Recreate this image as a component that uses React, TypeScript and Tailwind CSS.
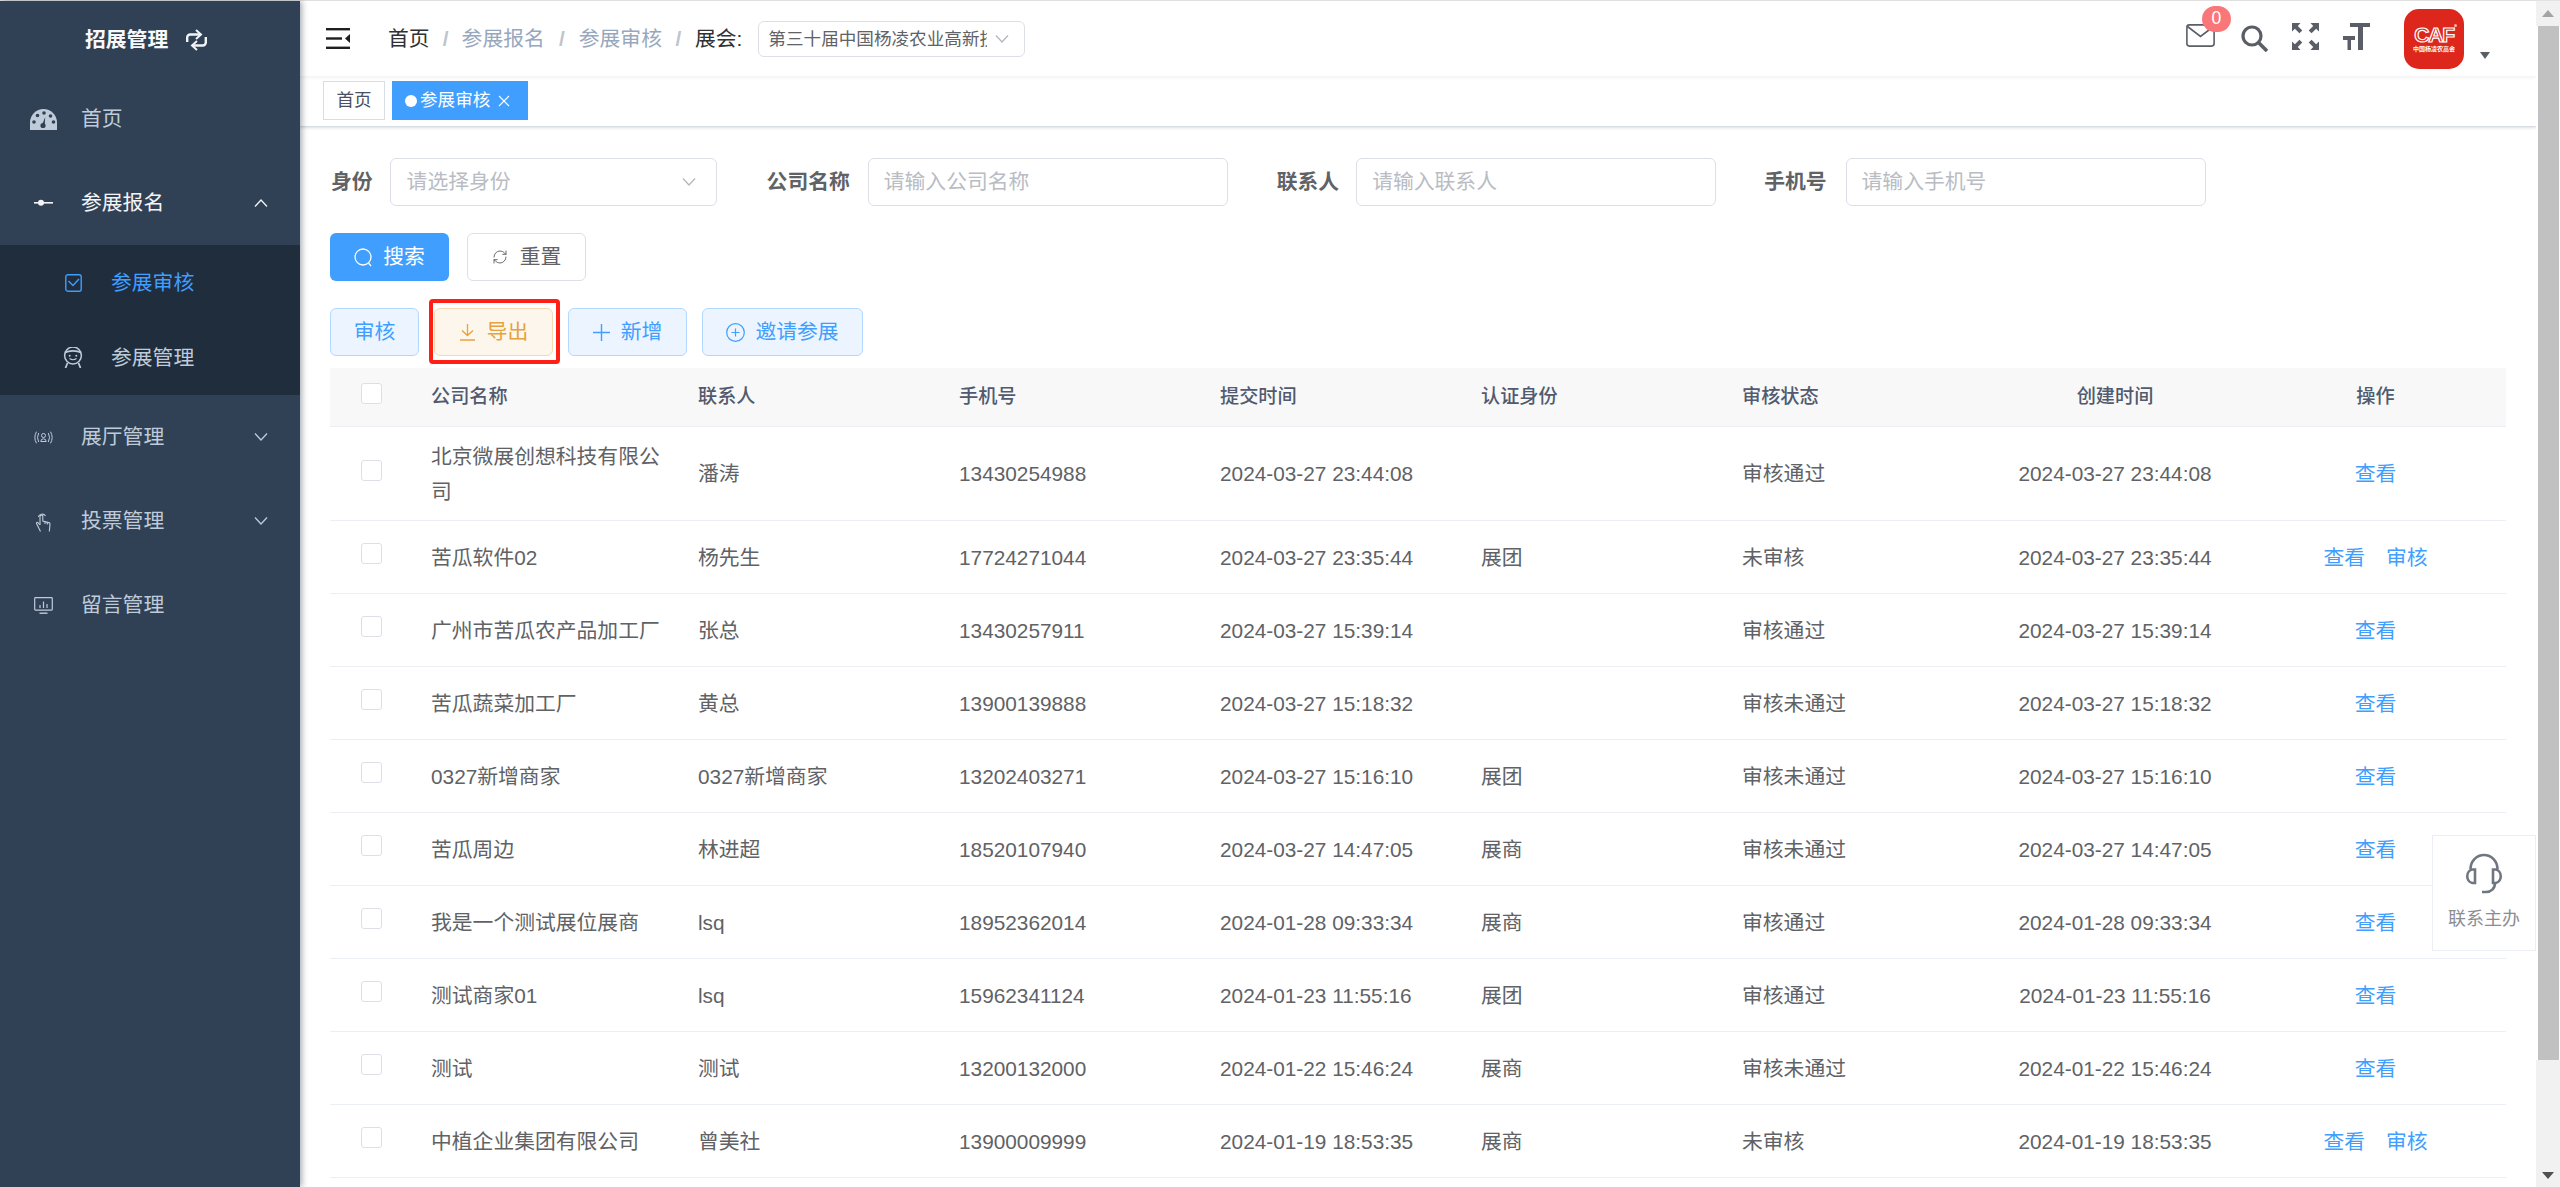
import { RefreshCw } from "lucide-react";

type Row = {
  company: string;
  contact: string;
  phone: string;
  time: string;
  identity: string;
  status: string;
  review?: boolean;
};

const rows: Row[] = [
  { company: "北京微展创想科技有限公司", contact: "潘涛", phone: "13430254988", time: "2024-03-27 23:44:08", identity: "", status: "审核通过" },
  { company: "苦瓜软件02", contact: "杨先生", phone: "17724271044", time: "2024-03-27 23:35:44", identity: "展团", status: "未审核", review: true },
  { company: "广州市苦瓜农产品加工厂", contact: "张总", phone: "13430257911", time: "2024-03-27 15:39:14", identity: "", status: "审核通过" },
  { company: "苦瓜蔬菜加工厂", contact: "黄总", phone: "13900139888", time: "2024-03-27 15:18:32", identity: "", status: "审核未通过" },
  { company: "0327新增商家", contact: "0327新增商家", phone: "13202403271", time: "2024-03-27 15:16:10", identity: "展团", status: "审核未通过" },
  { company: "苦瓜周边", contact: "林进超", phone: "18520107940", time: "2024-03-27 14:47:05", identity: "展商", status: "审核未通过" },
  { company: "我是一个测试展位展商", contact: "lsq", phone: "18952362014", time: "2024-01-28 09:33:34", identity: "展商", status: "审核通过" },
  { company: "测试商家01", contact: "lsq", phone: "15962341124", time: "2024-01-23 11:55:16", identity: "展团", status: "审核通过" },
  { company: "测试", contact: "测试", phone: "13200132000", time: "2024-01-22 15:46:24", identity: "展商", status: "审核未通过" },
  { company: "中植企业集团有限公司", contact: "曾美社", phone: "13900009999", time: "2024-01-19 18:53:35", identity: "展商", status: "未审核", review: true },
];

const GRID = "grid grid-cols-[85px_267px_261px_261px_261px_261px_259px_260px_261px]";

function Chevron({ up = false, color = "#bfcbd9", size = 14 }: { up?: boolean; color?: string; size?: number }) {
  return (
    <svg width={size} height={8} viewBox="0 0 14 8" fill="none" stroke={color} strokeWidth="1.3">
      <polyline points={up ? "1,7.5 7,1 13,7.5" : "1,0.5 7,7 13,0.5"} />
    </svg>
  );
}

function MenuItem({ icon, label, chevron, up, bright }: { icon: React.ReactNode; label: string; chevron?: boolean; up?: boolean; bright?: boolean }) {
  return (
    <div className={`flex h-[84px] items-center pl-[30px] pr-[32px] ${bright ? "text-[#f4f4f5]" : "text-[#bfcbd9]"}`}>
      <span className="mr-[24px] flex w-[27px] items-center justify-center">{icon}</span>
      <span className="flex-1">{label}</span>
      {chevron && <Chevron up={up} color={bright ? "#f4f4f5" : "#bfcbd9"} />}
    </div>
  );
}

function SubItem({ icon, label, active }: { icon: React.ReactNode; label: string; active?: boolean }) {
  return (
    <div className={`flex h-[75px] items-center pl-[63px] ${active ? "text-[#409eff]" : "text-[#bfcbd9]"}`}>
      <span className="mr-[28px] flex w-[20px] items-center justify-center">{icon}</span>
      <span>{label}</span>
    </div>
  );
}

function Checkbox() {
  return <span className="mb-[7px] block h-[21px] w-[21px] rounded-[3px] border border-[#dcdfe6] bg-white" />;
}

function Sidebar() {
  return (
    <aside className="z-20 w-[300px] shrink-0 bg-[#304156] text-[20.8px] shadow-[2px_0_6px_rgba(0,21,41,0.35)]">
      <div className="flex h-[76px] items-center pl-[85px] pt-[2px] text-[#f8f9fb]">
        <span className="font-bold">招展管理</span>
        <svg className="ml-[17px]" width="23" height="22" viewBox="0 0 23 22" fill="none" stroke="#f1f3f5" strokeWidth="2.4">
          <path d="M2.2 13 V8.5 a3 3 0 0 1 3-3 H16" />
          <path d="M11 1 L16 5.5 L11 10" strokeWidth="2" />
          <path d="M20.8 8 V13.5 a3 3 0 0 1-3 3 H7" />
          <path d="M12 12 L7 16.5 L12 21" strokeWidth="2" />
        </svg>
      </div>
      <MenuItem
        label="首页"
        icon={
          <svg width="27" height="21" viewBox="0 0 27 21">
            <path d="M0 21 V13.5 A13.5 13.5 0 0 1 27 13.5 V21 Z" fill="#bfcbd9" />
            <circle cx="4" cy="13" r="1.8" fill="#304156" />
            <circle cx="7.5" cy="6.5" r="1.8" fill="#304156" />
            <circle cx="14" cy="4" r="1.8" fill="#304156" />
            <circle cx="20.5" cy="7" r="1.8" fill="#304156" />
            <circle cx="23.5" cy="13" r="1.8" fill="#304156" />
            <circle cx="13" cy="16.5" r="2.6" fill="#304156" />
            <path d="M12 16 L15.2 8 L14.6 17 Z" fill="#304156" />
          </svg>
        }
      />
      <MenuItem
        label="参展报名"
        bright
        chevron
        up
        icon={
          <svg width="19" height="8" viewBox="0 0 19 8">
            <rect x="0" y="3" width="19" height="1.6" fill="#f4f4f5" />
            <circle cx="7" cy="3.8" r="3" fill="#f4f4f5" />
          </svg>
        }
      />
      <div className="bg-[#1f2d3d]">
        <SubItem
          active
          label="参展审核"
          icon={
            <svg width="17" height="18" viewBox="0 0 17 18" fill="none" stroke="#409eff" strokeWidth="1.4">
              <rect x="0.8" y="0.8" width="15.4" height="16.4" rx="2" />
              <polyline points="3.5,7 8,11.5 14,5" />
            </svg>
          }
        />
        <SubItem
          label="参展管理"
          icon={
            <svg width="20" height="21" viewBox="0 0 20 21" fill="none" stroke="#bfcbd9" strokeWidth="1.5">
              <circle cx="10" cy="8.5" r="8.4" />
              <path d="M2 5.5 C6 3.2 14 3.2 18 5.5" strokeWidth="1.8" />
              <circle cx="6.7" cy="8.8" r="1" fill="#bfcbd9" stroke="none" />
              <circle cx="13.3" cy="8.8" r="1" fill="#bfcbd9" stroke="none" />
              <path d="M6.5 11.5 Q10 14 13.5 11.5" strokeWidth="1.1" />
              <path d="M4.5 16 L2.5 21 M15.5 16 L17.5 21" strokeWidth="1.8" />
            </svg>
          }
        />
      </div>
      <MenuItem
        label="展厅管理"
        chevron
        icon={
          <svg width="19" height="13" viewBox="0 0 19 13" fill="none" stroke="#bfcbd9" strokeWidth="1">
            <path d="M2.5 0.7 Q-0.8 6.5 2.5 12.3" />
            <path d="M4.7 2 Q2.2 6.5 4.7 11" />
            <path d="M16.5 0.7 Q19.8 6.5 16.5 12.3" />
            <path d="M14.3 2 Q16.8 6.5 14.3 11" />
            <circle cx="9.5" cy="4.5" r="2" />
            <path d="M6.8 10.5 Q6.8 7.8 9.5 7.8 Q12.2 7.8 12.2 10.5 Z" />
          </svg>
        }
      />
      <MenuItem
        label="投票管理"
        chevron
        icon={
          <svg width="16" height="21" viewBox="0 0 16 21" fill="none" stroke="#bfcbd9" strokeWidth="1.1">
            <path d="M2.3 6 A4 4 0 0 1 9.5 5" />
            <path d="M4 14 V5.5 a1.4 1.4 0 0 1 2.8 0 V10 l6 1.6 a1.6 1.6 0 0 1 1.2 1.8 L13.3 20.5" />
            <path d="M4 14 L1.6 11.2 a1.2 1.2 0 0 0-1.2 1 L4.5 20.5" />
            <path d="M9 10.5 V13 M11.3 11 V13.5" />
          </svg>
        }
      />
      <MenuItem
        label="留言管理"
        icon={
          <svg width="19" height="17" viewBox="0 0 19 17" fill="none" stroke="#bfcbd9" strokeWidth="1.2">
            <rect x="0.7" y="0.7" width="17.6" height="12.4" rx="0.8" />
            <path d="M6 11 V8 M9.5 11 V4.5 M13 11 V7" />
            <path d="M5.5 16.2 H13.5" strokeWidth="1.4" />
          </svg>
        }
      />
    </aside>
  );
}

function HeaderIcons() {
  return (
    <div className="ml-auto flex h-full items-start pr-[46px]">
      <div className="relative mt-[23px] h-[23px] w-[29px]">
        <svg width="29" height="23" viewBox="0 0 29 23" fill="none" stroke="#5a5e66" strokeWidth="1.6">
          <rect x="0.9" y="0.9" width="27.2" height="21.2" rx="2.5" />
          <path d="M1.5 2.5 L14.5 12.5 L27.5 2.5" />
        </svg>
        <span className="absolute left-[16px] top-[-18px] flex h-[26px] w-[29px] items-center justify-center rounded-full bg-[#f97779] text-[17.6px] leading-none text-white">0</span>
      </div>
      <svg className="ml-[26px] mt-[24px]" width="27" height="27" viewBox="0 0 27 27" fill="none" stroke="#5a5e66" strokeWidth="3.2">
        <circle cx="11" cy="11" r="9" />
        <path d="M17.5 17.5 L26 26" strokeWidth="3.6" />
      </svg>
      <svg className="ml-[24px] mt-[22px]" width="27" height="27" viewBox="0 0 27 27" fill="#5a5e66" stroke="none">
        <path d="M0 0 H8.5 L5.8 2.9 L10.3 7.4 L7.4 10.3 L2.9 5.8 L0 8.5 Z" />
        <path d="M27 0 H18.5 L21.2 2.9 L16.7 7.4 L19.6 10.3 L24.1 5.8 L27 8.5 Z" />
        <path d="M0 27 H8.5 L5.8 24.1 L10.3 19.6 L7.4 16.7 L2.9 21.2 L0 18.5 Z" />
        <path d="M27 27 H18.5 L21.2 24.1 L16.7 19.6 L19.6 16.7 L24.1 21.2 L27 18.5 Z" />
      </svg>
      <svg className="ml-[24px] mt-[22px]" width="27" height="27" viewBox="0 0 27 27" fill="#5a5e66">
        <path d="M7 0 H27 V4 H20 V27 H15 V4 H7 Z" />
        <path d="M0 13 H12 V17 H8 V27 H4.5 V17 H0 Z" />
      </svg>
      <div className="relative ml-[34px] mt-[8px] flex h-[60px] w-[60px] flex-col items-center rounded-[15px] bg-[#dd261c] text-white">
        <span className="mt-[14px] h-[24px] text-[21px] font-bold leading-[24px] tracking-[-1.2px] text-[#dd261c] [-webkit-text-stroke:1.2px_white]">CAF</span>
        <span className="-mt-px whitespace-nowrap text-[6px] font-bold leading-[7px]">中国杨凌农高会</span>
        <span className="absolute left-[50px] top-[15px] h-[3px] w-[3px] rounded-full bg-[#f2b6b0]" />
      </div>
      <svg className="ml-[16px] mt-[51px]" width="10" height="7" viewBox="0 0 10 7" fill="#5a5e66">
        <path d="M0 0 H10 L5 7 Z" />
      </svg>
    </div>
  );
}

function Header() {
  return (
    <header className="relative z-10 flex h-[75px] shrink-0 items-center bg-white pl-[26px] text-[20.8px] shadow-[0_1px_4px_rgba(0,21,41,0.08)]">
      <svg className="mr-[38px] shrink-0" width="24" height="21" viewBox="0 0 24 21" fill="#1f1f1f">
        <rect x="0" y="0" width="24" height="2.4" />
        <rect x="0" y="9.3" width="16" height="2.4" />
        <rect x="0" y="18.6" width="24" height="2.4" />
        <path d="M24 6 V15 L19 10.5 Z" />
      </svg>
      <span className="text-[#303133]">首页</span>
      <span className="w-[32px] text-center font-bold text-[#c0c4cc]">/</span>
      <span className="text-[#97a8be]">参展报名</span>
      <span className="w-[34px] text-center font-bold text-[#c0c4cc]">/</span>
      <span className="text-[#97a8be]">参展审核</span>
      <span className="w-[33px] text-center font-bold text-[#c0c4cc]">/</span>
      <span className="text-[#303133]">展会:</span>
      <div className="ml-[16px] flex h-[36px] w-[267px] items-center rounded-[6px] border border-[#dcdfe6] pl-[9px] pr-[15px]">
        <span className="w-[219px] overflow-hidden whitespace-nowrap text-[17.6px] leading-[34px] text-[#606266]">第三十届中国杨凌农业高新技术成果博览会</span>
        <span className="ml-auto"><Chevron color="#b4b7bd" size={14} /></span>
      </div>
      <HeaderIcons />
    </header>
  );
}

function Tabs() {
  return (
    <div className="flex h-[51px] shrink-0 items-start gap-[7px] border-b border-[#d8dce5] bg-white pl-[23px] pt-[5px] text-[17.6px] shadow-[0_1px_3px_0_rgba(0,0,0,0.12),0_0_3px_0_rgba(0,0,0,0.04)]">
      <div className="flex h-[39px] w-[62px] items-center justify-center border border-[#d8dce5] text-[#495060]">首页</div>
      <div className="flex h-[39px] w-[136px] items-center bg-[#409eff] pl-[13px] text-white">
        <span className="mr-[3px] h-[12px] w-[12px] rounded-full bg-white" />
        <span>参展审核</span>
        <svg className="ml-[8px]" width="12" height="12" viewBox="0 0 12 12" stroke="white" strokeWidth="1.1">
          <path d="M1 1 L11 11 M11 1 L1 11" />
        </svg>
      </div>
    </div>
  );
}

function Field({ label, placeholder, className, gapClass }: { label: string; placeholder: string; className: string; gapClass: string }) {
  return (
    <div className={`flex items-center ${className}`}>
      <span className={`font-bold text-[#606266] ${gapClass}`}>{label}</span>
      <input
        readOnly
        placeholder={placeholder}
        className="h-[48px] w-[360px] rounded-[6px] border border-[#dcdfe6] bg-white px-[15px] text-[20.8px] outline-none placeholder:text-[#b9bcc3]"
      />
    </div>
  );
}

function Filters() {
  return (
    <div className="flex h-[48px] items-center pl-[1px] text-[20.8px]">
      <span className="mr-[17px] font-bold text-[#606266]">身份</span>
      <div className="flex h-[48px] w-[327px] items-center justify-between rounded-[6px] border border-[#dcdfe6] pl-[16px] pr-[20px] text-[#b9bcc3]">
        <span>请选择身份</span>
        <Chevron color="#b4b7bd" />
      </div>
      <Field className="ml-[50px]" gapClass="mr-[18px]" label="公司名称" placeholder="请输入公司名称" />
      <Field className="ml-[49px]" gapClass="mr-[17px]" label="联系人" placeholder="请输入联系人" />
      <Field className="ml-[48px]" gapClass="mr-[19px]" label="手机号" placeholder="请输入手机号" />
    </div>
  );
}

function SearchButtons() {
  return (
    <div className="mt-[27px] flex gap-[18px] text-[20.8px]">
      <button className="flex h-[48px] w-[119px] items-center justify-center gap-[11px] rounded-[6px] bg-[#409eff] text-white">
        <svg width="18" height="19" viewBox="0 0 18 19" fill="none" stroke="white" strokeWidth="1.3">
          <circle cx="9" cy="9" r="8" />
          <path d="M14.5 15 L17 18" />
        </svg>
        <span>搜索</span>
      </button>
      <button className="flex h-[48px] w-[119px] items-center justify-center gap-[12px] rounded-[6px] border border-[#dcdfe6] bg-white text-[#606266]">
        <RefreshCw size={16} strokeWidth={1.4} color="#606266" />
        <span>重置</span>
      </button>
    </div>
  );
}

const blueBtn = "flex h-[48px] items-center justify-center rounded-[6px] border border-[#b3d8ff] bg-[#ecf5ff] text-[#409eff]";

function ActionButtons() {
  return (
    <div className="mt-[27px] flex text-[20.8px]">
      <button className={`${blueBtn} w-[89px]`}>审核</button>
      <button className="relative ml-[15px] flex h-[48px] w-[119px] items-center justify-center gap-[11px] rounded-[6px] border border-[#f5dab1] bg-[#fdf6ec] text-[#e6a23c]">
        <svg width="17" height="17" viewBox="0 0 17 17" fill="none" stroke="#e6a23c" strokeWidth="1.3">
          <path d="M8.5 0 V11 M3 6.5 L8.5 11.5 L14 6.5 M1 16 H16" />
        </svg>
        <span>导出</span>
        <span className="absolute bottom-[-9px] left-[-6px] right-[-8px] top-[-10px] rounded-[4px] border-[4px] border-[#ff1f14]" />
      </button>
      <button className={`${blueBtn} ml-[15px] w-[119px] gap-[11px]`}>
        <svg width="17" height="17" viewBox="0 0 17 17" stroke="#409eff" strokeWidth="1.4">
          <path d="M8.5 0 V17 M0 8.5 H17" />
        </svg>
        <span>新增</span>
      </button>
      <button className={`${blueBtn} ml-[15px] w-[161px] gap-[10px]`}>
        <svg width="19" height="19" viewBox="0 0 19 19" fill="none" stroke="#409eff" strokeWidth="1.2">
          <circle cx="9.5" cy="9.5" r="8.8" />
          <path d="M9.5 5.5 V13.5 M5.5 9.5 H13.5" />
        </svg>
        <span>邀请参展</span>
      </button>
    </div>
  );
}

function DataTable() {
  return (
    <div className="mt-[12px] w-[2176px] text-[20.8px] text-[#606266]">
      <div className={`${GRID} h-[59px] items-center border-b border-[#ebeef5] bg-[#f8f8f9] text-[19.2px] font-medium text-[#515a6e]`}>
        <div className="flex items-center pl-[31px]"><Checkbox /></div>
        <div className="pl-[16px]">公司名称</div>
        <div className="pl-[16px]">联系人</div>
        <div className="pl-[16px]">手机号</div>
        <div className="pl-[16px]">提交时间</div>
        <div className="pl-[16px]">认证身份</div>
        <div className="pl-[16px]">审核状态</div>
        <div className="text-center">创建时间</div>
        <div className="text-center">操作</div>
      </div>
      {rows.map((r, i) => (
        <div key={r.phone} className={`${GRID} items-center border-b border-[#ebeef5] leading-[35px] ${i === 0 ? "h-[94px]" : "h-[73px]"}`}>
          <div className="flex items-center pl-[31px]"><Checkbox /></div>
          <div className="pl-[16px] pr-[16px]">{r.company}</div>
          <div className="pl-[16px]">{r.contact}</div>
          <div className="pl-[16px]">{r.phone}</div>
          <div className="pl-[16px]">{r.time}</div>
          <div className="pl-[16px]">{r.identity}</div>
          <div className="pl-[16px]">{r.status}</div>
          <div className="text-center">{r.time}</div>
          <div className="flex justify-center gap-[21px] text-[#409eff]">
            <span>查看</span>
            {r.review && <span>审核</span>}
          </div>
        </div>
      ))}
    </div>
  );
}

function FakeScrollbar() {
  return (
    <div className="z-30 flex w-[24px] shrink-0 flex-col bg-[#f1f1f1]">
      <div className="flex h-[25px] items-center justify-center">
        <svg width="12" height="7" viewBox="0 0 12 7" fill="#a3a3a3"><path d="M0 7 H12 L6 0 Z" /></svg>
      </div>
      <div className="h-[1034px] border-l-2 border-r border-white bg-[#c1c1c1]" />
      <div className="flex flex-1 items-end justify-center pb-[8px]">
        <svg width="12" height="7" viewBox="0 0 12 7" fill="#505050"><path d="M0 0 H12 L6 7 Z" /></svg>
      </div>
    </div>
  );
}

export default function App() {
  return (
    <div className="relative h-[1187px] w-[2560px] overflow-hidden bg-white [font-family:'Liberation_Sans','Noto_Sans_CJK_SC',sans-serif]">
      <div className="h-px w-full bg-[#e3e3e3]" />
      <div className="flex h-[1186px]">
        <Sidebar />
        <main className="flex min-w-0 flex-1 flex-col">
          <Header />
          <Tabs />
          <div className="flex-1 pl-[30px] pt-[31px]">
            <Filters />
            <SearchButtons />
            <ActionButtons />
            <DataTable />
          </div>
        </main>
        <FakeScrollbar />
      </div>
      <div className="absolute left-[2432px] top-[835px] z-20 flex h-[116px] w-[104px] flex-col items-center border border-[#ebeef5] bg-white">
        <svg className="mt-[17px]" width="40" height="41" viewBox="0 0 40 41" fill="none" stroke="#6f7680" strokeWidth="2.6">
          <path d="M6.5 16 A13.5 14 0 0 1 33.5 16" />
          <path d="M11 16.5 V30 H8.5 A6 6.8 0 0 1 8.5 16.5 Z" />
          <path d="M29 16.5 V30 H31.5 A6 6.8 0 0 0 31.5 16.5 Z" />
          <path d="M31 30 C31 35.5 27 39 22 39 H18" />
        </svg>
        <span className="mt-[13px] text-[18px] leading-[24px] text-[#8a8d93]">联系主办</span>
      </div>
    </div>
  );
}
